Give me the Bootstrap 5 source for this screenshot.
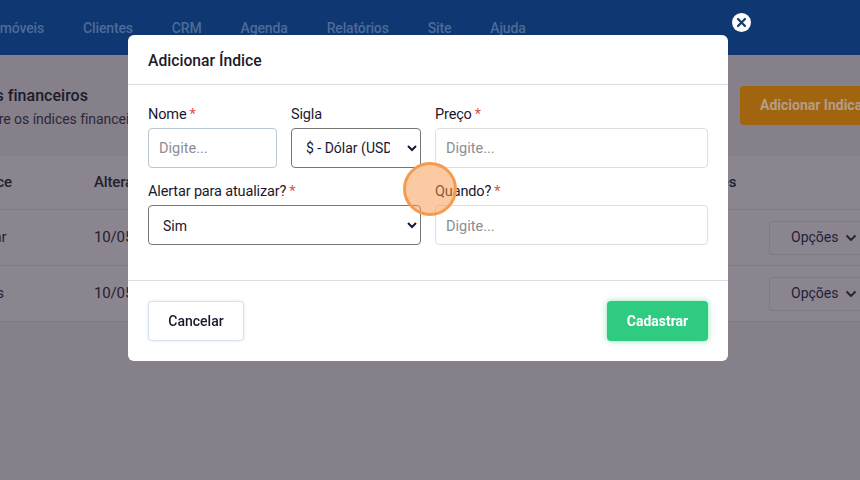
<!DOCTYPE html>
<html lang="pt-BR"><head><meta charset="utf-8"><title>Adicionar Índice</title>
<link href="https://cdn.jsdelivr.net/npm/bootstrap@5.3.0/dist/css/bootstrap.min.css" rel="stylesheet">
<style>
html,body{height:100%;overflow:hidden}
body{font-family:Roboto,"Liberation Sans",sans-serif;background:#85808a;color:#1b1730;font-size:14.5px;letter-spacing:-.15px}
.page-shell{width:1000px;margin-left:-48px;min-height:480px}
.top-bar{height:55px;background:#0f3872;padding:19px 0 0 44px;gap:39px;color:#4d6b98;font-weight:500;font-size:14px;line-height:18px;letter-spacing:-.15px}
.head-band{height:101px;padding:31px 32px 0 0}
.head-title{font-weight:500;font-size:16px;line-height:20px;color:#1e1a2b;letter-spacing:.02px}
.head-sub{font-size:14px;line-height:24px;margin-top:1px;color:#2c2839;letter-spacing:-.05px;padding-left:3px}
.add-btn{width:180px;height:39px;background:#a1640f;color:#b39e8a;border:0;border-radius:4px;font-weight:700;font-size:14px;text-align:left;padding-left:20px}
.idx-table{background:#8a858f;color:#231f30;font-size:15px}
.idx-row{border-bottom:1px solid #7c7a8a;padding-left:20px}
.idx-row.h-top{height:54px;font-weight:500}
.idx-row.h-body{height:56px}
.col-a{width:122px}.col-b{width:601px}.col-c{width:74px}
.opt-btn{width:104px;height:34px;border:1px solid #7d7985;background:#8a858f;border-radius:4px;font-size:14px;color:#251f38;padding:0 0 0 21px;gap:7px}
.dlg-free{position:fixed;left:128px;top:35px;width:600px;height:326px;background:#fff;border-radius:6px;display:flex;flex-direction:column}
.dlg-head{height:50px;flex:none;border-bottom:1px solid #dcdfe4;padding:3px 20px 0;font-weight:500;font-size:15.7px;letter-spacing:0;color:#1e1a2b}
.dlg-body{height:195px;flex:none;padding:21px 20px 0}
.dlg-foot{height:81px;flex:none;border-top:1px solid #dcdfe4;padding:20px}
.grid-row{--bs-gutter-x:14px;--bs-gutter-y:0}
.w-first{width:143px}.w-second{width:144px}.w-rest{width:287px}
.fld-label{display:block;line-height:18px;margin-bottom:4px;white-space:nowrap}
.req{color:#d9534f;margin-left:3px}
.fld{height:40px;font-size:14.5px;padding:0 10px;border:1px solid #dcdfe4;border-radius:4px;color:#1b1730}
.fld::placeholder{color:#8d8d95}
.fld-a{border-color:#b9c6d4}
.fld-sel{width:100%;height:40px;font-size:14px;letter-spacing:0;border:1px solid #767676;border-radius:4px;background:#fff;color:#1b1730;padding:0 14px 0 10px}
.mt-row{margin-top:15px}
.mt-row .fld,.mt-row .fld-sel{padding-top:2px}
.btn-cancel{width:96px;height:40px;border:1px solid #d8e2ee;background:#fff;border-radius:4px;font-weight:500;font-size:14px;color:#1b1730;box-shadow:0 0 3px rgba(120,160,220,.3)}
.btn-save{width:101px;height:40px;border:0;background:#2ecb80;border-radius:4px;color:#fff;font-weight:700;font-size:14px;padding-top:2px;box-shadow:0 0 6px rgba(46,203,128,.55)}
.close-dot{position:fixed;left:732px;top:13px;width:19px;height:19px;border-radius:50%;background:#fff;border:0;padding:0}
.close-dot svg{display:block}
.pulse{position:fixed;left:403px;top:162px;width:54px;height:54px;border-radius:50%;background:rgba(247,150,70,.5);border:3px solid #f59b50}
</style></head><body>
<div class="page-shell">
 <nav class="top-bar d-flex"><span>Imóveis</span><span>Clientes</span><span>CRM</span><span>Agenda</span><span>Relatórios</span><span>Site</span><span>Ajuda</span></nav>
 <div class="head-band d-flex justify-content-between align-items-start">
  <div><div class="head-title">Índices financeiros</div>
  <div class="head-sub">Cadastre os índices financeiros</div></div>
  <button class="add-btn" type="button">Adicionar Indicador</button>
 </div>
 <div class="idx-table">
  <div class="idx-row h-top d-flex align-items-center"><div class="col-a">Índice</div><div class="col-b">Alteração</div><div>Ações</div></div>
  <div class="idx-row h-body d-flex align-items-center"><div class="col-a">Dólar</div><div class="col-b">10/05/2023</div><div class="col-c"></div><button class="opt-btn d-flex align-items-center" type="button">Opções<svg width="12" height="8" viewBox="0 0 12 8"><path d="M1.5 1.5L6 6l4.500-4.500" fill="none" stroke="#251f38" stroke-width="1.800"/></svg></button></div>
  <div class="idx-row h-body d-flex align-items-center"><div class="col-a">Yens</div><div class="col-b">10/05/2023</div><div class="col-c"></div><button class="opt-btn d-flex align-items-center" type="button">Opções<svg width="12" height="8" viewBox="0 0 12 8"><path d="M1.5 1.5L6 6l4.500-4.500" fill="none" stroke="#251f38" stroke-width="1.800"/></svg></button></div>
 </div>
</div>
<button class="close-dot" type="button" aria-label="Fechar"><svg width="19" height="19" viewBox="0 0 19 19"><path d="M6 6l7 7M13 6l-7 7" stroke="#173a6b" stroke-width="2.2" stroke-linecap="round"/></svg></button>
<div class="dlg-free">
 <div class="dlg-head d-flex align-items-center">Adicionar Índice</div>
 <div class="dlg-body">
  <div class="row grid-row">
   <div class="col-auto w-first"><label class="fld-label">Nome<span class="req">*</span></label><input class="form-control fld fld-a" placeholder="Digite..."></div>
   <div class="col-auto w-second"><label class="fld-label">Sigla</label><select class="fld-sel"><option>$ - Dólar (USD)</option></select></div>
   <div class="col-auto w-rest"><label class="fld-label">Preço<span class="req">*</span></label><input class="form-control fld" placeholder="Digite..."></div>
  </div>
  <div class="row grid-row mt-row">
   <div class="col-6"><label class="fld-label">Alertar para atualizar?<span class="req">*</span></label><select class="fld-sel"><option>Sim</option></select></div>
   <div class="col-6"><label class="fld-label">Quando?<span class="req">*</span></label><input class="form-control fld" placeholder="Digite..."></div>
  </div>
 </div>
 <div class="dlg-foot d-flex justify-content-between"><button class="btn-cancel" type="button">Cancelar</button><button class="btn-save" type="button">Cadastrar</button></div>
</div>
<div class="pulse"></div>
<script src="https://cdn.jsdelivr.net/npm/bootstrap@5.3.0/dist/js/bootstrap.bundle.min.js"></script>
</body></html>
